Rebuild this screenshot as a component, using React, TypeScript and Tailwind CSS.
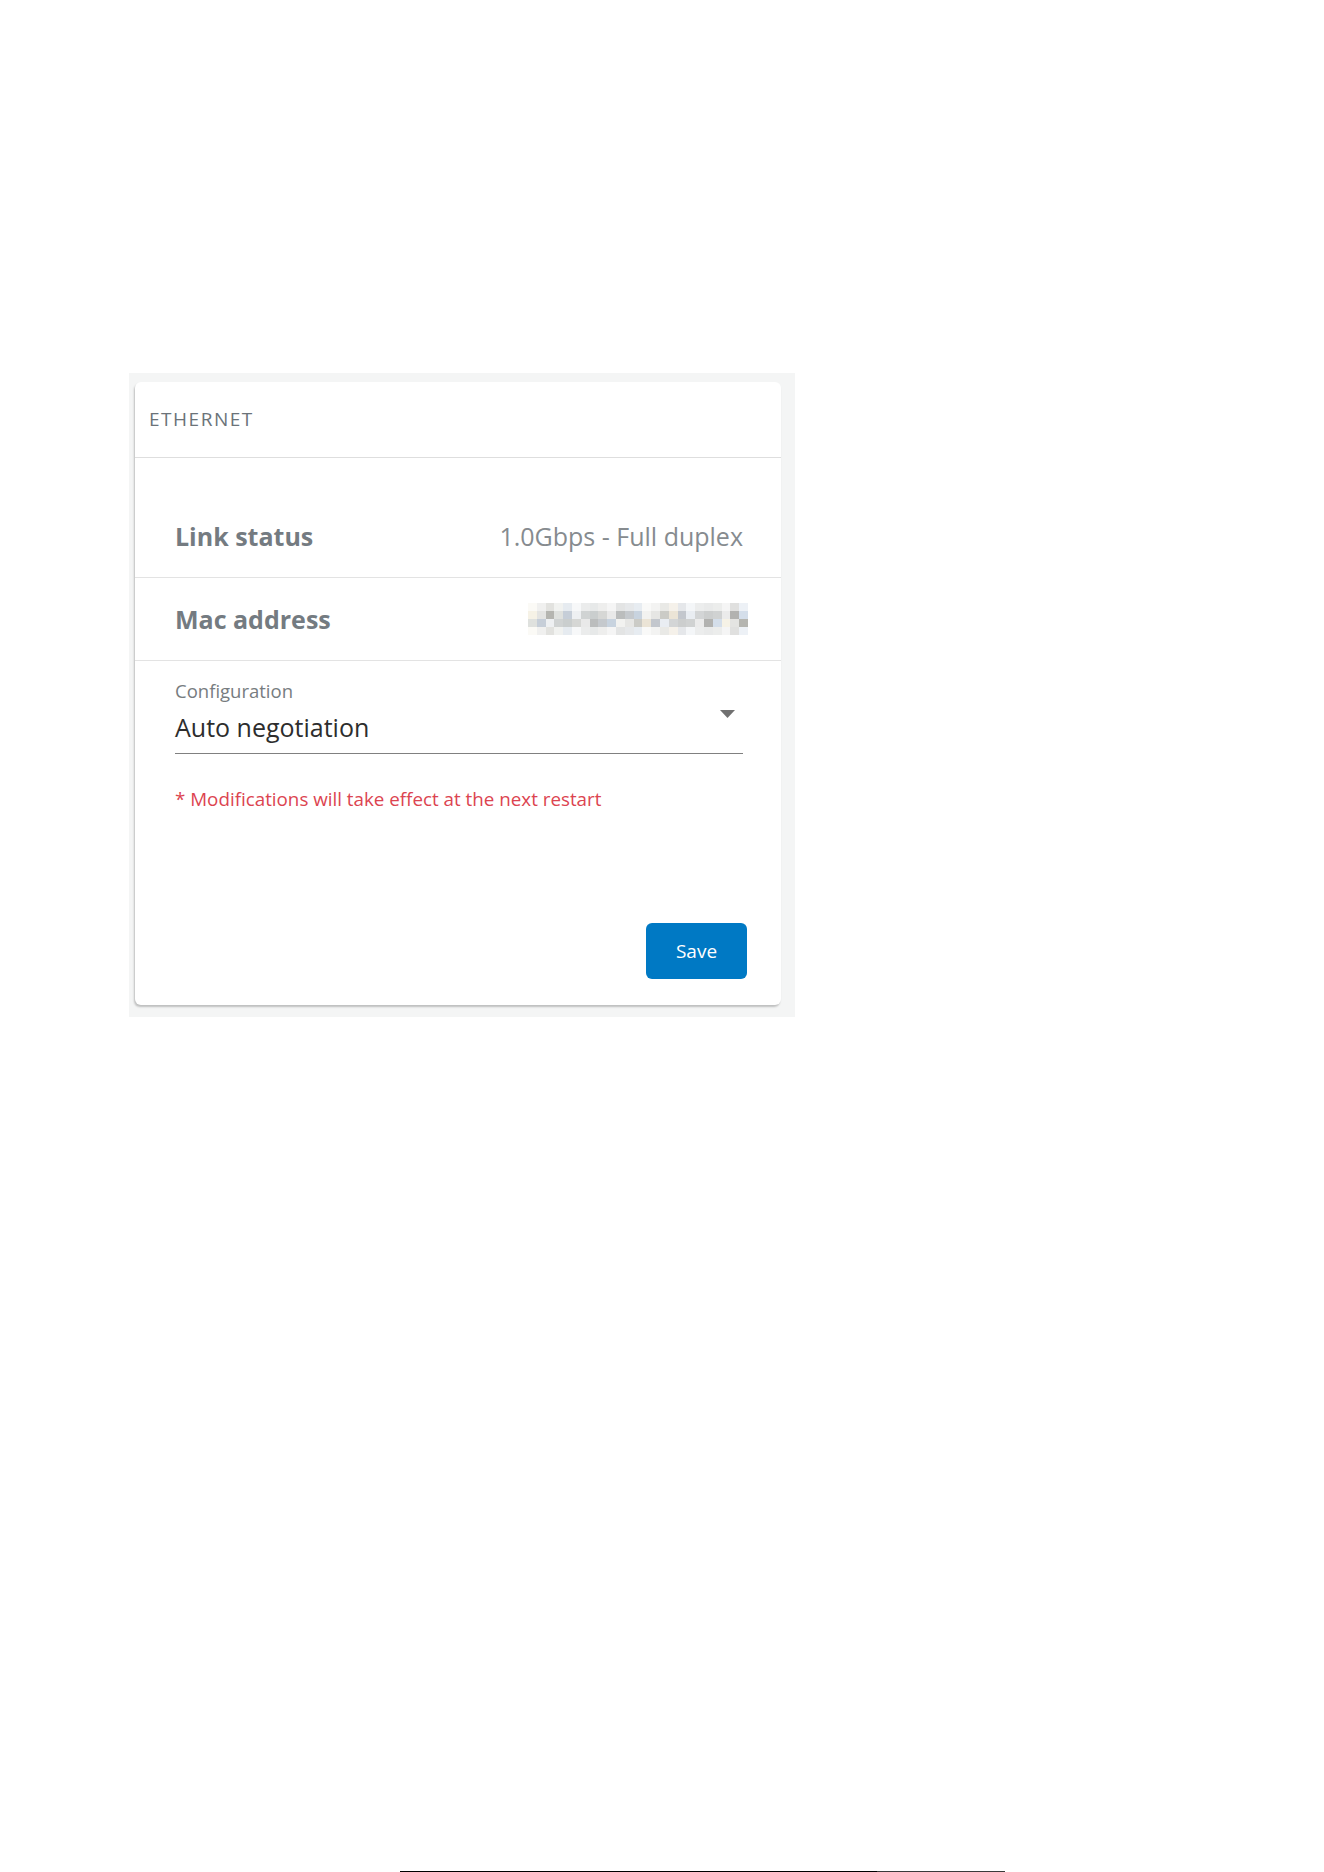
import React from "react";

// Pixelated placeholder for the hidden MAC address (mosaic of soft grey cells)
const MID_ROW = [
  "#f6f2e6", "#e4e4e2", "#b5b5b0", "#dfe1de", "#c6ced8", "#eef0f2", "#d0d3d3",
  "#cacece", "#d6d7d5", "#e9e9e9", "#bbbdbd", "#c5c9cd", "#c8d3df", "#f2f2f0",
  "#e6e6e4", "#cbcbc6", "#ebe4d6", "#c3c7cd", "#e9edf2", "#d3d5d6", "#cccece",
  "#d0d2d2", "#ebebeb", "#b2b2b0", "#d4deea",
];
const EDGE_ROW = [
  "#fbfaf6", "#f0f0ef", "#e2e2df", "#f1f2f0", "#e6ebf0", "#f7f8f9", "#ebecec",
  "#e7e9e9", "#eeeeed", "#f5f5f5", "#e3e4e4", "#e6e8ea", "#e7ecf1", "#f9f9f8",
  "#f3f3f2", "#e9e9e6", "#f5f1ea", "#e5e7ea", "#f4f6f8", "#eceded", "#e9eaea",
  "#ecedec", "#f5f5f5", "#e0e0df", "#edf1f6",
];

function MacMosaic() {
  const rows = [EDGE_ROW, MID_ROW, MID_ROW.slice(3).concat(MID_ROW.slice(0, 3)), EDGE_ROW];
  return (
    <div className="flex flex-col mr-[-5px]">
      {rows.map((row, r) => (
        <div key={r} className="flex">
          {row.map((c, i) => (
            <div key={i} className="w-[8.8px] h-[8px]" style={{ backgroundColor: c }} />
          ))}
        </div>
      ))}
    </div>
  );
}

function InfoRow({ label, children }: { label: string; children: React.ReactNode }) {
  return (
    <div className="h-[83px] flex items-center justify-between pl-[40px] pr-[38px] border-b border-[#e3e3e3]">
      <span className="text-[25px] leading-[34px] font-bold text-[#747b81]">{label}</span>
      {children}
    </div>
  );
}

export default function App() {
  return (
    <div className="relative min-h-[1872px] bg-white font-['Open_Sans',sans-serif]">
      <div className="pt-[373px] pl-[129px]">
        <div className="w-[666px] bg-[#f4f5f5] pt-[9px] pl-[6px] pr-[14px] pb-[12px]">
          <div className="h-[623px] bg-white rounded-[6px] shadow-[-1px_2px_2px_rgba(0,0,0,0.22)] flex flex-col">
            <div className="h-[76px] flex items-center px-[14px] border-b border-[#dedede]">
              <span className="text-[19px] font-medium tracking-[0.08em] text-[#6b7379]">ETHERNET</span>
            </div>

            <div className="pt-[37px]">
              <InfoRow label="Link status">
                <span className="text-[25px] leading-[34px] text-[#868b8f]">1.0Gbps - Full duplex</span>
              </InfoRow>
              <InfoRow label="Mac address">
                <MacMosaic />
              </InfoRow>
            </div>

            <div className="pt-[17px] pl-[40px] pr-[38px]">
              <div className="relative border-b border-[#808080] pb-[9px]">
                <div className="text-[18.5px] leading-[25px] text-[#777c80]">Configuration</div>
                <div className="mt-[7px] text-[25px] leading-[34px] text-[#2d2d2d]">Auto negotiation</div>
                <svg
                  className="absolute right-[8px] top-[32px]"
                  width="15"
                  height="8"
                  viewBox="0 0 15 8"
                >
                  <polygon points="0,0 15,0 7.5,8" fill="#707070" />
                </svg>
              </div>
              <div className="mt-[33px] text-[18.8px] leading-[25px] text-[#dc4450]">
                * Modifications will take effect at the next restart
              </div>
            </div>

            <div className="mt-auto flex justify-end pr-[34px] pb-[26px]">
              <button className="w-[101px] h-[56px] rounded-[6px] bg-[#0079c4] text-white text-[19px]">
                Save
              </button>
            </div>
          </div>
        </div>
      </div>

      {/* thin strip along the very bottom edge */}
      <div className="absolute left-[400px] top-[1871px] h-px w-[477px] bg-black" />
      <div className="absolute left-[877px] top-[1871px] h-px w-[128px] bg-[#3a3a3a]" />
    </div>
  );
}
